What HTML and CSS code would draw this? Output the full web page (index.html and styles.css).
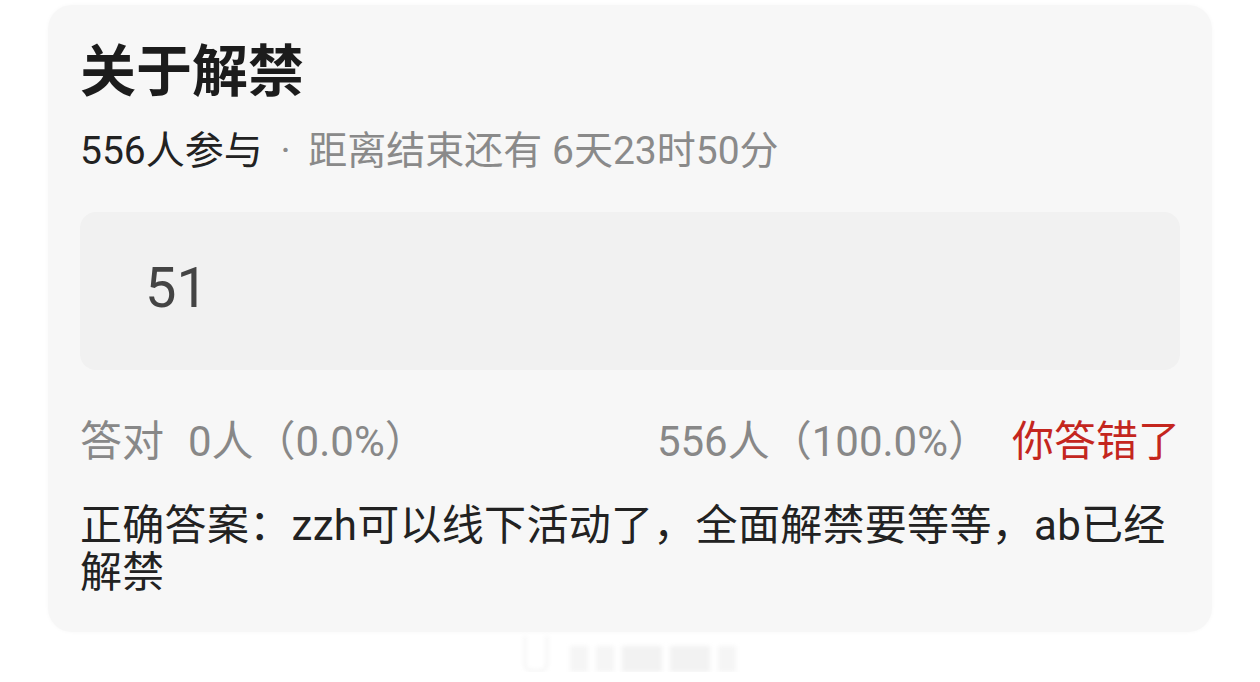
FILE: index.html
```html
<!DOCTYPE html>
<html lang="zh-CN">
<head>
    <meta charset="UTF-8">
    <meta name="viewport" content="width=device-width, initial-scale=1.0">
    <title>关于解禁</title>
    <link rel="stylesheet" href="styles.css">
</head>
<body>
    <div class="card">
        <h1 class="title">关于解禁</h1>
        <div class="meta">
            <span class="count">556人参与</span>
            <span class="dot">·</span>
            <span>距离结束还有 6天23时50分</span>
        </div>
        <div class="option">51</div>
        <div class="stats">
            <div><span class="label">答对</span>0人（0.0%）</div>
            <div class="result">
                <span>556人（100.0%）</span>
                <span class="wrong">你答错了</span>
            </div>
        </div>
        <p class="answer">正确答案：zzh可以线下活动了，全面解禁要等等，ab已经解禁</p>
    </div>
    <div class="watermark">
        <span class="mark-icon"></span>
        <span class="bar"></span>
        <span class="bar"></span>
        <span class="bar wide"></span>
        <span class="bar wide"></span>
        <span class="bar"></span>
    </div>
</body>
</html>
```

FILE: styles.css
```css
body {
    margin: 0;
    padding: 0;
    background-color: #fff;
    font-family: Roboto, "Noto Sans CJK SC", sans-serif;
}
.card {
    width: 1100px;
    margin: 5px 0 0 48px;
    padding: 35px 32px 36px;
    background-color: #f7f7f7;
    border-radius: 24px;
    box-shadow: 0 0 4px rgba(0, 0, 0, 0.03);
}
.title {
    margin: 0;
    font-size: 56px;
    line-height: 64px;
    font-weight: bold;
    color: #1c1c1c;
}
.meta {
    margin-top: 25px;
    font-size: 39px;
    line-height: 44px;
    color: #8a8a8a;
}
.meta .count {
    color: #222;
}
.meta .dot {
    margin: 0 8px;
}
.option {
    margin-top: 39px;
    height: 158px;
    padding-left: 65px;
    display: flex;
    align-items: center;
    box-sizing: border-box;
    padding-bottom: 6px;
    background-color: #f1f1f1;
    border-radius: 16px;
    font-size: 56px;
    color: #444;
}
.stats {
    margin-top: 48px;
    display: flex;
    justify-content: space-between;
    font-size: 42px;
    line-height: 48px;
    color: #888;
}
.stats .label {
    margin-right: 24px;
}
.result {
    display: flex;
    gap: 22px;
}
.wrong {
    color: #c4261e;
}
.answer {
    margin: 36px 0 0;
    font-size: 42px;
    line-height: 47px;
    letter-spacing: 0.3px;
    color: #222;
}
.watermark {
    display: flex;
    justify-content: center;
    align-items: flex-end;
    gap: 8px;
    margin-top: 6px;
    height: 34px;
    filter: blur(2px);
}
.mark-icon {
    width: 20px;
    height: 34px;
    margin-right: 14px;
    border: 2px solid #f0f0f0;
    border-top: none;
    border-radius: 0 0 8px 8px;
}
.bar {
    width: 18px;
    height: 26px;
    background-color: #f5f5f5;
}
.bar.wide {
    width: 40px;
    background-color: #f2f2f2;
}
```
